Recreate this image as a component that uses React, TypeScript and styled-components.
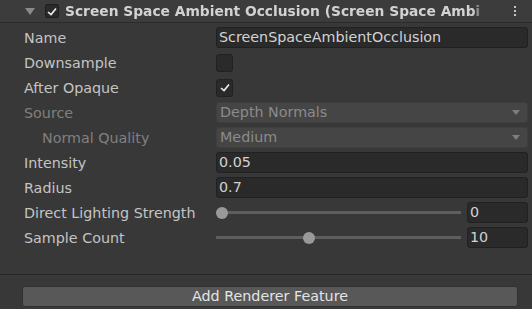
import React from 'react'
import styled, { createGlobalStyle } from 'styled-components'

const GlobalStyle = createGlobalStyle`
  html, body {
    margin: 0;
    padding: 0;
    background: #383838;
  }
  body {
    font-family: "DejaVu Sans", "Liberation Sans", sans-serif;
    font-size: 14.3px;
    color: #c4c4c4;
  }
`

interface SliderRow {
  label: string;
  min: number;
  max: number;
  value: number;
}

const sliders: SliderRow[] = [
  { label: 'Direct Lighting Strength', min: 0, max: 1, value: 0 },
  { label: 'Sample Count', min: 4, max: 20, value: 10 },
]

const Check = () => (
  <svg width="10" height="9" viewBox="0 0 10 9">
    <path d="M1 5 L4 7.5 L9 1.5" fill="none" stroke="#f0f0f0" strokeWidth="1.6" />
  </svg>
)

export default function App() {
  return (
    <>
      <GlobalStyle />
      <Inspector>
        <Header>
          <Foldout />
          <HeaderCheck><Check /></HeaderCheck>
          <Title>Screen Space Ambient Occlusion (Screen Space Ambi</Title>
          <Kebab>
            <span /><span /><span />
          </Kebab>
        </Header>

        <Rows>
          <Row>
            <Label>Name</Label>
            <TextField>ScreenSpaceAmbientOcclusion</TextField>
          </Row>
          <Row>
            <Label>Downsample</Label>
            <Toggle />
          </Row>
          <Row>
            <Label>After Opaque</Label>
            <Toggle><Check /></Toggle>
          </Row>
          <Row>
            <Label $disabled>Source</Label>
            <Dropdown>Depth Normals<Arrow /></Dropdown>
          </Row>
          <Row>
            <Label $disabled $indent>Normal Quality</Label>
            <Dropdown>Medium<Arrow /></Dropdown>
          </Row>
          <Row>
            <Label>Intensity</Label>
            <TextField>0.05</TextField>
          </Row>
          <Row>
            <Label>Radius</Label>
            <TextField>0.7</TextField>
          </Row>
          {sliders.map((s) => (
            <Row key={s.label}>
              <Label>{s.label}</Label>
              <Slider>
                <Track>
                  <Thumb style={{ left: `${((s.value - s.min) / (s.max - s.min)) * 100}%` }} />
                </Track>
                <NumberField>{s.value}</NumberField>
              </Slider>
            </Row>
          ))}
        </Rows>

        <Footer>
          <AddButton>Add Renderer Feature</AddButton>
        </Footer>
      </Inspector>
    </>
  )
}

const Inspector = styled.div`
  width: 532px;
  height: 309px;
  display: flex;
  flex-direction: column;
  background: #383838;
  overflow: hidden;
`

const Header = styled.div`
  height: 22px;
  display: flex;
  align-items: center;
  background: #3c3c3c;
  border-bottom: 1px solid #2a2a2a;
  padding-left: 25px;
  padding-right: 16px;
`

const Foldout = styled.div`
  width: 0;
  height: 0;
  border-left: 5px solid transparent;
  border-right: 5px solid transparent;
  border-top: 7px solid #8a8a8a;
  margin-top: 1px;
  margin-right: 10px;
`

const HeaderCheck = styled.div`
  width: 12px;
  height: 12px;
  border: 1px solid #1e1e1e;
  border-radius: 2px;
  background: #2a2a2a;
  display: flex;
  align-items: center;
  justify-content: center;
  margin-right: 6px;
`

const Title = styled.div`
  flex: 0 0 418px;
  font-size: 13.8px;
  font-weight: bold;
  color: #d2d2d2;
  white-space: nowrap;
  overflow: hidden;
  -webkit-mask-image: linear-gradient(to right, #000 408px, transparent 418px);
  mask-image: linear-gradient(to right, #000 408px, transparent 418px);
`

const Kebab = styled.div`
  margin-left: auto;
  display: flex;
  flex-direction: column;
  gap: 2px;
  > span {
    width: 2px;
    height: 2px;
    background: #c4c4c4;
  }
`

const Rows = styled.div`
  display: flex;
  flex-direction: column;
  padding: 2px 4px 0 24px;
`

const Row = styled.div`
  height: 25px;
  display: flex;
  align-items: center;
`

const Label = styled.div<{ $disabled?: boolean; $indent?: boolean }>`
  flex: 0 0 ${(p) => (p.$indent ? 174 : 192)}px;
  padding-left: ${(p) => (p.$indent ? 18 : 0)}px;
  color: ${(p) => (p.$disabled ? '#808080' : '#c4c4c4')};
  white-space: nowrap;
`

const TextField = styled.div`
  flex: 1;
  height: 19px;
  line-height: 19px;
  padding-left: 2px;
  background: #2a2a2a;
  border: 1px solid #212121;
  border-radius: 3px;
  color: #d2d2d2;
`

const Toggle = styled.div`
  width: 15px;
  height: 16px;
  background: #2a2a2a;
  border: 1px solid #212121;
  border-radius: 3px;
  display: flex;
  align-items: center;
  justify-content: center;
`

const Dropdown = styled.div`
  flex: 1;
  height: 19px;
  line-height: 19px;
  padding-left: 3px;
  display: flex;
  align-items: center;
  background: #454545;
  border: 1px solid #3e3e3e;
  border-radius: 3px;
  color: #8b8b8b;
`

const Arrow = styled.span`
  margin-left: auto;
  margin-right: 7px;
  width: 0;
  height: 0;
  border-left: 4px solid transparent;
  border-right: 4px solid transparent;
  border-top: 5px solid #7e7e7e;
`

const Slider = styled.div`
  flex: 1;
  display: flex;
  align-items: center;
  gap: 6px;
`

const Track = styled.div`
  position: relative;
  flex: 1;
  height: 3px;
  background: #5e5e5e;
  margin: 0 6px;
  &::before {
    content: '';
    position: absolute;
    left: -6px;
    right: -6px;
    top: 0;
    bottom: 0;
    background: #5e5e5e;
  }
`

const Thumb = styled.div`
  position: absolute;
  top: 50%;
  width: 12px;
  height: 12px;
  border-radius: 50%;
  background: #999999;
  transform: translate(-50%, -50%);
`

const NumberField = styled(TextField)`
  flex: 0 0 57px;
`

const Footer = styled.div`
  margin-top: 24px;
  border-top: 1px solid #262626;
  padding: 11px 14px 0 22px;
`

const AddButton = styled.div`
  height: 19px;
  line-height: 19px;
  text-align: center;
  background: #585858;
  border: 1px solid #303030;
  border-radius: 3px;
  color: #e4e4e4;
`
